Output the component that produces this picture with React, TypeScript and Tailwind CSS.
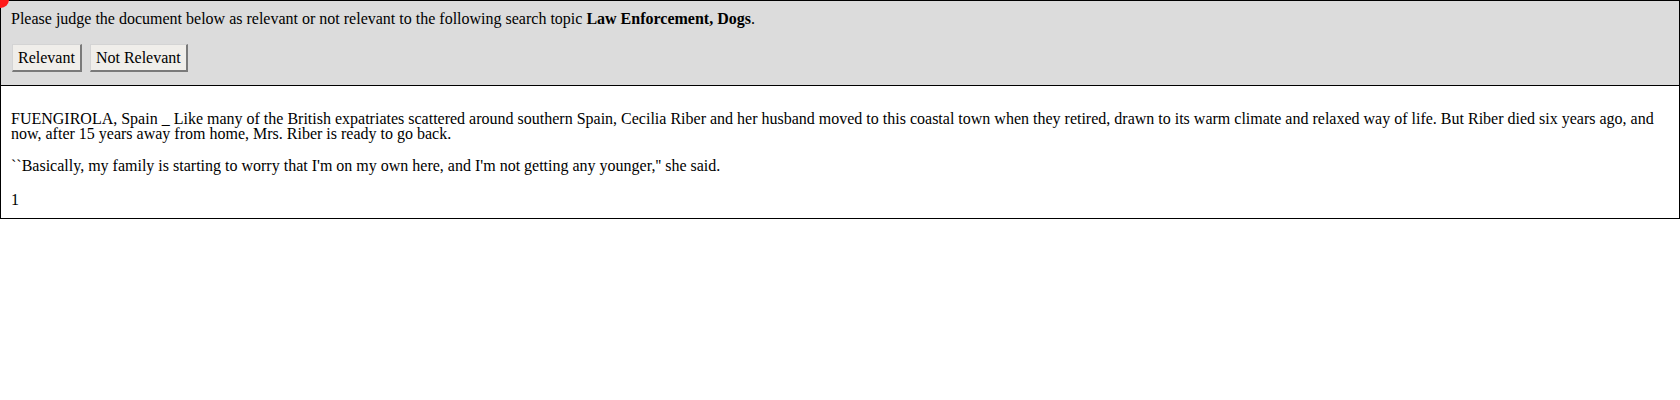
import React from "react";

export default function App() {
  const serif = { fontFamily: '"Liberation Serif", "Times New Roman", serif' };
  return (
    <div className="relative w-[1680px] bg-white text-black text-[16px]" style={serif}>
      <div className="absolute left-[-8px] top-[-9px] w-[17px] h-[17px] rounded-full bg-[#ff1a1a]" />
      <div className="border border-black bg-[#dcdcdc] pt-[9px] pb-[13px] px-[10px]">
        <div className="leading-[18px]">
          Please judge the document below as relevant or not relevant to the following search topic{" "}
          <b>Law Enforcement, Dogs</b>.
        </div>
        <div className="flex gap-[8px] mt-[16px] pl-[1px]">
          <button
            className="h-[28px] px-[5px] bg-[#f0eeea] border-t-[1px] border-l-[1px] border-r-[2px] border-b-[2px] border-t-[#d4d4d4] border-l-[#d4d4d4] border-r-[#7a7a7a] border-b-[#7a7a7a] leading-[18px] text-[16px]"
            style={serif}
          >
            Relevant
          </button>
          <button
            className="h-[28px] px-[5px] bg-[#f0eeea] border-t-[1px] border-l-[1px] border-r-[2px] border-b-[2px] border-t-[#d4d4d4] border-l-[#d4d4d4] border-r-[#7a7a7a] border-b-[#7a7a7a] leading-[18px] text-[16px]"
            style={serif}
          >
            Not Relevant
          </button>
        </div>
      </div>
      <div className="border border-t-0 border-black px-[10px] pt-[25px] pb-[11px] leading-[15px]">
        <p>
          FUENGIROLA, Spain _ Like many of the British expatriates scattered around southern Spain, Cecilia Riber and her
          husband moved to this coastal town when they retired, drawn to its warm climate and relaxed way of life. But Riber
          died six years ago, and now, after 15 years away from home, Mrs. Riber is ready to go back.
        </p>
        <p className="mt-[17px]">
          ``Basically, my family is starting to worry that I'm on my own here, and I'm not getting any younger,'' she said.
        </p>
        <p className="mt-[19px]">1</p>
      </div>
    </div>
  );
}
